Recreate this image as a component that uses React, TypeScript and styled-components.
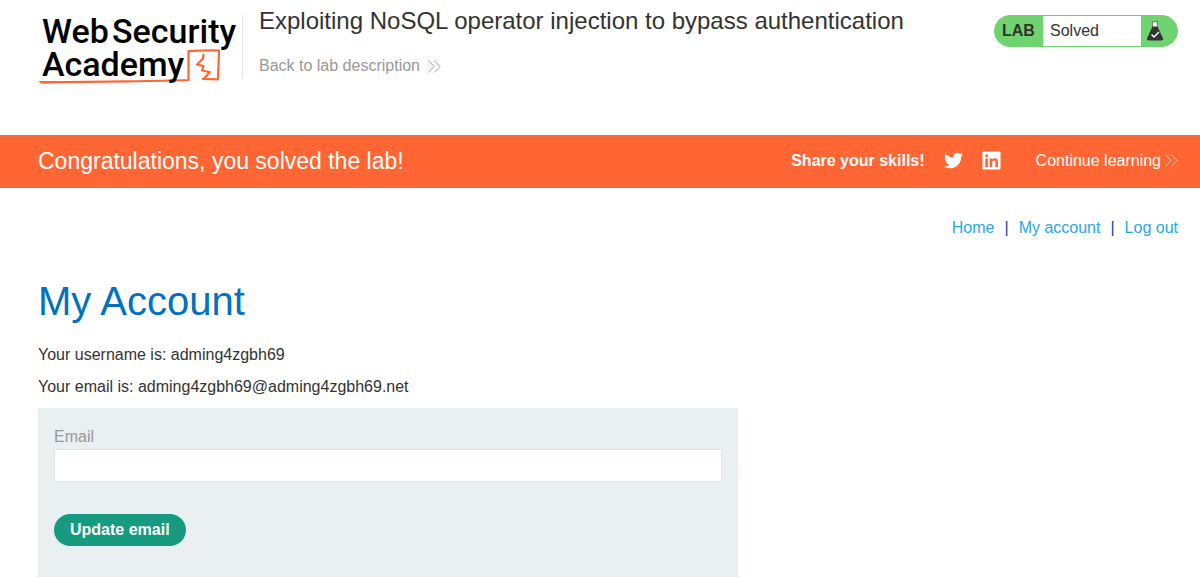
import React from "react";
import styled, { createGlobalStyle } from "styled-components";

const GlobalStyle = createGlobalStyle`
  *, *::before, *::after {
    box-sizing: border-box;
  }
  body {
    margin: 0;
    background: #fff;
    color: #333332;
    font-family: "Liberation Sans", Arial, Helvetica, sans-serif;
    font-size: 16px;
    line-height: 24px;
  }
  h1, h2, p {
    margin: 0;
    font-weight: 400;
  }
  a {
    text-decoration: none;
  }
`;

const Header = styled.header`
  display: flex;
  align-items: flex-start;
  min-height: 135px;
  padding: 0 22px 0 38px;
`;

const LogoLink = styled.a`
  display: block;
  flex: none;
  width: 204px;
  margin-top: 15px;
  height: 70px;
`;

const LogoSvg = styled.svg`
  display: block;
  overflow: visible;
`;

const TitleBlock = styled.div`
  flex: 1;
  min-height: 63px;
  margin-top: 15px;
  padding-left: 16px;
  border-left: 1px solid #e4e4e4;
`;

const LabTitle = styled.h2`
  margin-top: -8px;
  font-size: 24px;
  line-height: 28px;
`;

const BackLink = styled.a`
  display: inline-flex;
  align-items: center;
  gap: 8px;
  margin-top: 18px;
  padding-top: 1px;
  color: #999;
`;

const Status = styled.div`
  display: flex;
  flex: none;
  width: 184px;
  height: 32px;
  margin-top: 15px;
  border: 1px solid #6fd36f;
  border-radius: 16px;
  background: #6fd36f;
  overflow: hidden;
  line-height: 30px;
`;

const StatusTag = styled.span`
  width: 48px;
  padding-left: 7px;
  font-weight: 700;
`;

const StatusText = styled.p`
  flex: 1;
  padding-left: 7px;
  background: #fff;
`;

const StatusIcon = styled.span`
  width: 36px;
  padding: 5px 0 0 5px;
  line-height: 0;
`;

const Banner = styled.section`
  display: flex;
  align-items: center;
  min-height: 53px;
  padding: 0 22px 2px 38px;
  background: #ff6633;
  color: #fff;
`;

const BannerTitle = styled.h2`
  flex: 1;
  font-size: 23px;
`;

const Share = styled.div`
  display: flex;
  align-items: center;
  gap: 19px;
  margin-right: 35px;
  font-weight: 700;
`;

const IconLink = styled.a`
  display: block;
  height: 19px;
  color: #fff;
`;

const ContinueLink = styled.a`
  display: flex;
  align-items: center;
  gap: 4px;
  color: #fff;
`;

const Main = styled.main`
  padding: 28px 22px 0 38px;
`;

const Nav = styled.nav`
  display: flex;
  justify-content: flex-end;
  gap: 10px;
  color: #0b4a9c;
`;

const NavLink = styled.a`
  color: #29a9e4;
`;

const PageTitle = styled.h1`
  margin-top: 37px;
  color: #0071bc;
  font-size: 40px;
  line-height: 48px;
`;

const Details = styled.div`
  display: grid;
  gap: 8px;
  margin: 18px 0 9px;
`;

const Form = styled.form`
  max-width: 700px;
  padding: 17px 16px 32px;
  background: #eaeff2;
`;

const Label = styled.label`
  display: block;
  color: #999;
`;

const EmailInput = styled.input`
  display: block;
  width: 100%;
  height: 33px;
  margin: 0 0 32px;
  padding: 0 8px;
  border: 1px solid #e4e4e4;
  border-radius: 2px;
  background: #fff;
  color: #333332;
  font: inherit;
`;

const SubmitButton = styled.button`
  display: block;
  height: 32px;
  padding: 0 16px;
  border: 0;
  border-radius: 16px;
  background: #169b80;
  color: #fff;
  font: inherit;
  font-weight: 700;
`;

function Chevrons() {
  return (
    <svg width="13" height="13" viewBox="0 0 13 13" fill="none" stroke="currentColor" strokeWidth="0.9" aria-hidden="true">
      <path d="M0.5 0.5 6 6.5 0.5 12.5M6.5 0.5 12 6.5 6.5 12.5" />
    </svg>
  );
}

function Logo() {
  return (
    <LogoSvg width="200" height="70" viewBox="0 0 200 70" role="img" aria-label="Web Security Academy">
      <g fill="none" stroke="#ff6633" strokeWidth="2.2" strokeLinejoin="round" strokeLinecap="round">
        <path d="M3 67.3Q50 67 90 66.300T150.500 65V36.200Q166 35 181 35.500L180 64.300 165 64" />
        <path d="M165.500 39.500 165 43.500 159 49.500 165.500 51 164 55.500 172 57.300 165.300 64" />
      </g>
      <path d="M0 66 5 66 50 66.500 5 68.500z" fill="#ff6633" />
      <g fill="#000" fontFamily="Roboto, sans-serif" fontWeight="500" fontSize="34">
        <text x="4" y="28">Web</text>
        <text x="74" y="28">Security</text>
        <text x="4" y="61">Academy</text>
      </g>
    </LogoSvg>
  );
}

function Flask() {
  return (
    <svg width="18" height="20" viewBox="0 0 18 20" aria-hidden="true">
      <path d="M6.500 1h5v5h-5z" fill="#fff" />
      <path d="M5.500 0.700h7M6.600 1v5M11.400 1v5" stroke="#6b7a6b" strokeWidth="1" />
      <path d="M6.500 5.500h5L17 17.500q.5 2-1.500 2H2.500q-2 0-1.500-2z" fill="#333332" />
      <path d="M5.500 13.500 8 16l5-5" stroke="#fff" strokeWidth="1.500" fill="none" />
    </svg>
  );
}

function Twitter() {
  return (
    <svg width="19" height="19" viewBox="0 0 24 24" fill="currentColor" aria-hidden="true">
      <path d="M23.95 4.57a10 10 0 0 1-2.820.770 4.960 4.960 0 0 0 2.160-2.720c-.950.550-2 .950-3.130 1.180a4.920 4.920 0 0 0-8.380 4.480C7.690 8.100 4.070 6.130 1.640 3.160a4.820 4.820 0 0 0-.670 2.480c0 1.710.870 3.210 2.190 4.100a4.900 4.900 0 0 1-2.230-.620v.060a4.920 4.920 0 0 0 3.950 4.830 5 5 0 0 1-2.210.080 4.940 4.940 0 0 0 4.600 3.420A9.870 9.870 0 0 1 0 19.540a13.990 13.990 0 0 0 7.560 2.210c9.050 0 14-7.500 14-13.980 0-.210 0-.420-.020-.630a9.940 9.940 0 0 0 2.460-2.550z" />
    </svg>
  );
}

function LinkedIn() {
  return (
    <svg width="19" height="19" viewBox="0 0 19 19" aria-hidden="true">
      <rect x="0.500" y="0.500" width="18" height="18" rx="1" fill="#fff" />
      <g fill="#ff6633">
        <circle cx="4.600" cy="4.700" r="1.500" />
        <path d="M3.300 7.500h2.600v8.500H3.300zM7.600 7.500h2.500v1.200c.5-.9 1.400-1.400 2.600-1.400 2.500 0 3.300 1.500 3.300 4V16h-2.600v-4.300c0-1.200-.2-2.200-1.500-2.200s-1.700 1-1.700 2.200V16H7.600z" />
      </g>
    </svg>
  );
}

export default function App() {
  return (
    <>
      <GlobalStyle />
      <Header>
        <LogoLink href="#" aria-label="Web Security Academy">
          <Logo />
        </LogoLink>
        <TitleBlock>
          <LabTitle>Exploiting NoSQL operator injection to bypass authentication</LabTitle>
          <BackLink href="#">
            Back to lab description
            <Chevrons />
          </BackLink>
        </TitleBlock>
        <Status>
          <StatusTag>LAB</StatusTag>
          <StatusText>Solved</StatusText>
          <StatusIcon>
            <Flask />
          </StatusIcon>
        </Status>
      </Header>
      <Banner>
        <BannerTitle>Congratulations, you solved the lab!</BannerTitle>
        <Share>
          <span>Share your skills!</span>
          <IconLink href="#" aria-label="Share on Twitter">
            <Twitter />
          </IconLink>
          <IconLink href="#" aria-label="Share on LinkedIn">
            <LinkedIn />
          </IconLink>
        </Share>
        <ContinueLink href="#">
          Continue learning
          <Chevrons />
        </ContinueLink>
      </Banner>
      <Main>
        <Nav>
          <NavLink href="#">Home</NavLink>
          <span>|</span>
          <NavLink href="#">My account</NavLink>
          <span>|</span>
          <NavLink href="#">Log out</NavLink>
        </Nav>
        <PageTitle>My Account</PageTitle>
        <Details>
          <p>Your username is: adming4zgbh69</p>
          <p>Your email is: adming4zgbh69@adming4zgbh69.net</p>
        </Details>
        <Form onSubmit={(event) => event.preventDefault()}>
          <Label htmlFor="email">Email</Label>
          <EmailInput id="email" type="email" name="email" />
          <SubmitButton type="submit">Update email</SubmitButton>
        </Form>
      </Main>
    </>
  );
}
